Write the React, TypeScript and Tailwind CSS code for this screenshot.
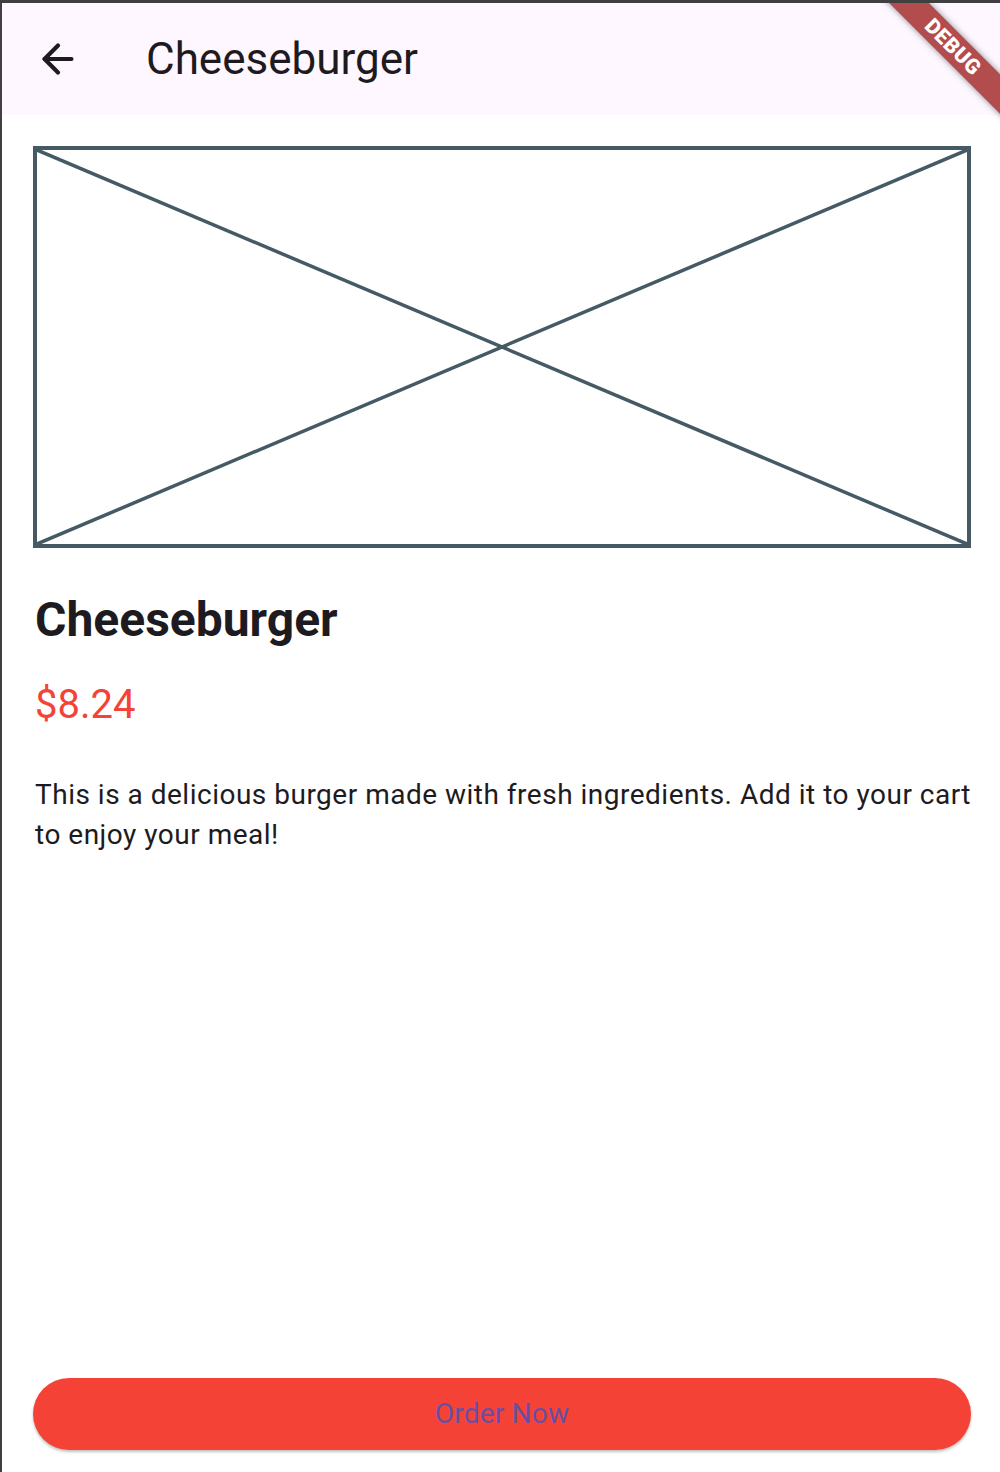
import { ArrowLeft } from "lucide-react";

function DebugBanner() {
  return (
    <div className="pointer-events-none absolute left-[851px] top-[30px] flex h-[28px] w-[200px] rotate-45 items-center justify-center bg-[#b34c4c] shadow-[0_0_6px_rgba(0,0,0,0.45)]">
      <span className="text-[21px] font-black leading-none tracking-[0.5px] text-white">
        DEBUG
      </span>
    </div>
  );
}

function Placeholder() {
  return (
    <div className="relative h-[402px] w-full border-4 border-[#455a64]">
      <svg
        className="absolute inset-0 h-full w-full"
        viewBox="0 0 100 100"
        preserveAspectRatio="none"
      >
        <line x1="0" y1="0" x2="100" y2="100" stroke="#455a64" strokeWidth="3.5" vectorEffect="non-scaling-stroke" />
        <line x1="100" y1="0" x2="0" y2="100" stroke="#455a64" strokeWidth="3.5" vectorEffect="non-scaling-stroke" />
      </svg>
    </div>
  );
}

export default function App() {
  return (
    <div
      className="relative flex h-[1472px] w-[1000px] flex-col overflow-hidden border-l-2 border-t-[3px] border-[#404040] bg-white text-[#1d1b20]"
      style={{ fontFamily: "Roboto, 'Noto Sans', sans-serif" }}
    >
      {/* app bar */}
      <header className="flex h-[112px] shrink-0 items-center bg-[#fef7ff]">
        <div className="flex w-[112px] justify-center">
          <ArrowLeft size={46} strokeWidth={2.2} className="text-[#1d1b20]" />
        </div>
        <h1 className="ml-[32px] text-[44px] font-normal leading-none">Cheeseburger</h1>
      </header>

      <main className="flex flex-1 flex-col pb-[22px] pl-[31px] pr-[29px] pt-[31px]">
        <Placeholder />

        <div className="-mr-[4px] pl-[2px]">
          <h2 className="mt-[44px] text-[48px] font-bold leading-[56px]">Cheeseburger</h2>
          <p className="mt-[33px] text-[40px] leading-[48px] text-[#f44336]">$8.24</p>
          <p className="mt-[46px] text-[28px] leading-[40px] tracking-[0.5px]">
            This is a delicious burger made with fresh ingredients. Add it to your cart to
            enjoy your meal!
          </p>
        </div>

        <button className="mt-auto h-[72px] w-full rounded-full bg-[#f44336] text-[28px] font-normal tracking-[0.2px] text-[#6750a4] shadow-[0_2px_3px_rgba(0,0,0,0.25)]">
          Order Now
        </button>
      </main>

      <DebugBanner />
    </div>
  );
}
